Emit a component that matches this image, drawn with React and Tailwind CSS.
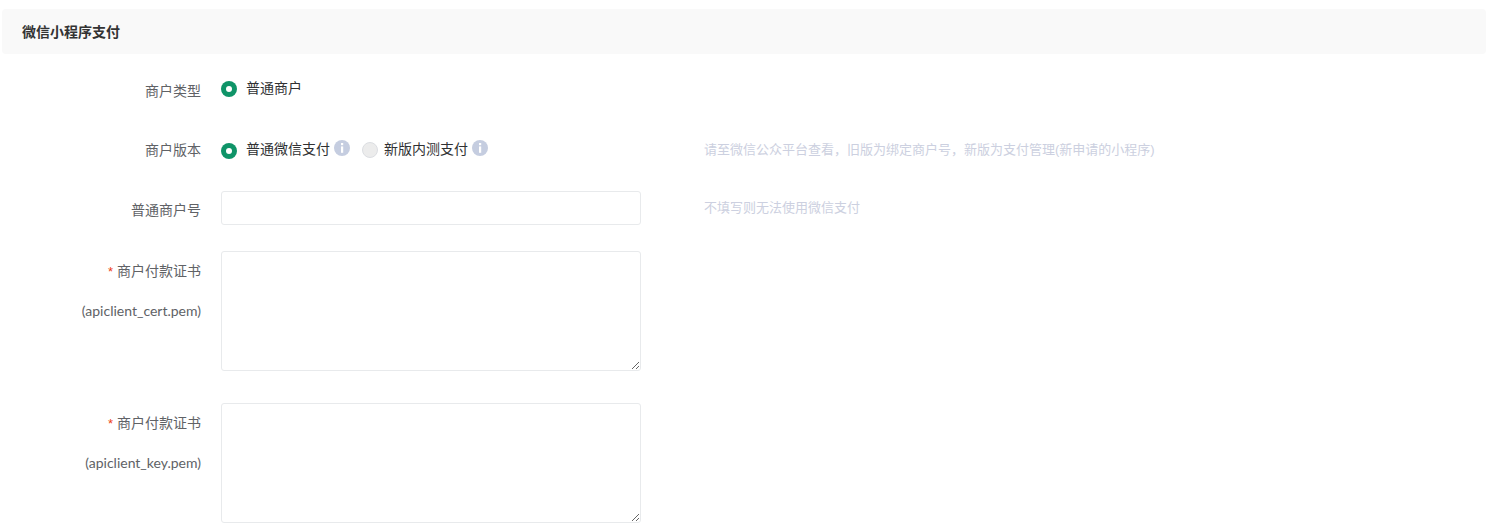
import React from 'react';

const font = "font-['Liberation_Sans','Noto_Sans_CJK_SC',sans-serif]";

const Radio = ({ checked, className = '' }) =>
    checked ? (
        <span className={`w-4 h-4 rounded-full bg-[#0f9468] flex items-center justify-center shrink-0 ${className}`}>
            <span className="w-1.5 h-1.5 rounded-full bg-white" />
        </span>
    ) : (
        <span className={`w-4 h-4 rounded-full bg-[#ececec] border border-[#dcdee2] shrink-0 ${className}`} />
    );

const Info = () => (
    <svg width="16" height="16" viewBox="0 0 16 16" className="shrink-0 -mt-1.5 ml-1">
        <circle cx="8" cy="8" r="8" fill="#c5cde0" />
        <rect x="7" y="3" width="2.2" height="2.2" fill="#fff" />
        <rect x="7" y="6.4" width="2.2" height="6.4" fill="#fff" />
    </svg>
);

const Label = ({ children, className = '' }) => (
    <div className={`w-[199px] shrink-0 text-right text-sm text-[#606266] ${className}`}>{children}</div>
);

const Required = () => <span className="text-[#ed4014] mr-1 text-[13px]">*</span>;

const App = () => {
    return (
        <div className={`w-[1486px] h-[529px] overflow-hidden bg-white pt-[9px] pl-[2px] ${font}`}>
            <div className="h-[45px] bg-[#f9f9f9] rounded-sm pl-5 flex items-center text-sm font-bold text-[#333]">
                微信小程序支付
            </div>

            <div className="flex mt-[25px] h-5 items-center">
                <Label className="relative top-[2px]">商户类型</Label>
                <div className="flex items-center ml-5 text-sm text-[#303133]">
                    <Radio checked />
                    <span className="ml-[9px] -mt-0.5">普通商户</span>
                </div>
            </div>

            <div className="flex mt-[42px] h-5 items-center">
                <Label className="relative -top-[1px]">商户版本</Label>
                <div className="flex items-center ml-5 w-[483px] text-sm text-[#303133]">
                    <Radio checked />
                    <span className="ml-[9px] -mt-1">普通微信支付</span>
                    <Info />
                    <Radio className="ml-3 -mt-0.5" />
                    <span className="ml-1.5 -mt-1">新版内测支付</span>
                    <Info />
                </div>
                <div className="text-[13px] text-[#ccd0e0] -mt-0.5">请至微信公众平台查看，旧版为绑定商户号，新版为支付管理(新申请的小程序)</div>
            </div>

            <div className="flex mt-[30px]">
                <Label className="pt-[9px]">普通商户号</Label>
                <input className="ml-5 w-[420px] h-[34px] border border-[#e8eaec] rounded-[3px] outline-none" />
                <div className="ml-[63px] pt-[7px] text-[13px] text-[#ccd0e0]">不填写则无法使用微信支付</div>
            </div>

            <div className="flex mt-[26px]">
                <Label className="pt-[10px]">
                    <div><Required />商户付款证书</div>
                    <div className="mt-[19px] font-['Lato',sans-serif]">(apiclient_cert.pem)</div>
                </Label>
                <textarea className="ml-5 w-[420px] h-[120px] border border-[#e8eaec] rounded-[3px] outline-none" />
            </div>

            <div className="flex mt-8">
                <Label className="pt-[10px]">
                    <div><Required />商户付款证书</div>
                    <div className="mt-[19px] font-['Lato',sans-serif]">(apiclient_key.pem)</div>
                </Label>
                <textarea className="ml-5 w-[420px] h-[120px] border border-[#e8eaec] rounded-[3px] outline-none" />
            </div>
        </div>
    );
};

export default App;
